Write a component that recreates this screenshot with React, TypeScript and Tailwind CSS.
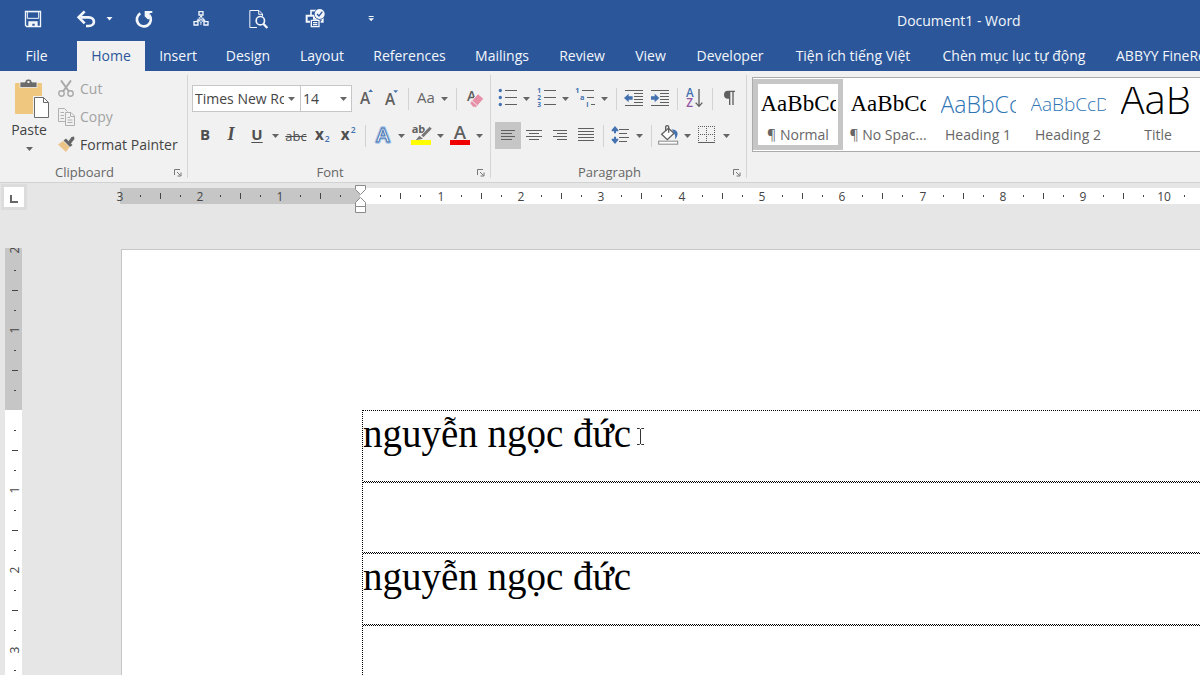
import type { ReactNode } from "react";

const INK = "#5f5f5f";
const BLUE = "#4472b0";

function Glyph({ children }: { children: ReactNode }) {
  return (
    <svg viewBox="0 0 78 81" className="h-[27px] w-[26px] shrink-0" fill="none" aria-hidden="true">
      {children}
    </svg>
  );
}

function Caret() {
  return (
    <svg viewBox="0 0 7 4" className="h-1 w-[7px] shrink-0" aria-hidden="true">
      <path d="M0 0H7L3.5 4Z" fill="#666" />
    </svg>
  );
}

function Tool({ label, children, active = false }: { label: string; children: ReactNode; active?: boolean }) {
  return (
    <button
      type="button"
      aria-label={label}
      className={`flex h-[27px] w-[26px] shrink-0 items-center justify-center text-[#4f4f4f] ${active ? "bg-[#c6c6c6]" : ""}`}
    >
      {children}
    </button>
  );
}

function More({ label }: { label: string }) {
  return (
    <button type="button" aria-label={label} className="flex h-[27px] w-[13px] shrink-0 items-center pl-0.5">
      <Caret />
    </button>
  );
}

function Divider() {
  return <span className="mx-1 h-[22px] w-px shrink-0 bg-[#d2d2d2]" />;
}

function Lines({ rows }: { rows: [number, number, number][] }) {
  return (
    <>
      {rows.map(([x, y, w]) => (
        <rect key={`${x}-${y}`} x={x} y={y} width={w} height="3" fill={INK} />
      ))}
    </>
  );
}

function Group({ title, width, children }: { title: string; width: string; children: ReactNode }) {
  return (
    <section aria-label={title} className={`my-1 flex shrink-0 flex-col border-r border-[#d5d5d5] ${width}`}>
      <div className="h-[87px]">{children}</div>
      <div className="flex h-5 items-center pt-2">
        <span className="flex-1 pr-1 text-center text-[13px] leading-5 text-[#666]">{title}</span>
        <button type="button" aria-label={`${title} settings`} className="mr-[5px] flex size-[9px] items-center">
          <svg viewBox="0 0 9 9" className="size-[9px]" fill="none" stroke="#777">
            <path d="M1.5 7V1.5H7M4 4L7.5 7.5M8 4.5V8H4.500" />
          </svg>
        </button>
      </div>
    </section>
  );
}

function Launch({ label, children }: { label: string; children: ReactNode }) {
  return (
    <button type="button" aria-label={label} className="flex size-[26px] shrink-0 items-center justify-center">
      <svg viewBox="0 0 78 78" className="size-[26px]" fill="none" stroke="#f3f6fb" strokeWidth="3" aria-hidden="true">
        {children}
      </svg>
    </button>
  );
}

function TitleBar() {
  return (
    <div className="flex h-[41px] items-center justify-between pl-5">
      <div className="flex shrink-0 items-center pb-[3px]">
        <Launch label="Save">
          <path d="M16.500 16.500H61.500V61.500H20L16.500 58Z" strokeWidth="4" />
          <path d="M22 17H56V37H22Z" strokeWidth="3" />
          <path d="M25 62V46H53V62H44V53H37V62Z" fill="#f3f6fb" stroke="none" />
        </Launch>
        <div className="ml-7 flex items-center">
          <Launch label="Undo">
            <path d="M20 34H44C65 34 65 60 44 60H36" strokeWidth="8" />
            <path d="M32 16L14 34L32 52" strokeWidth="8" />
          </Launch>
          <button type="button" aria-label="Undo history" className="flex h-6 w-[18px] items-center justify-center">
            <svg viewBox="0 0 7 4" className="h-1 w-[7px]">
              <path d="M0.500 0H6.500L3.500 3.500Z" fill="#f3f6fb" />
            </svg>
          </button>
        </div>
        <div className="ml-[13px]">
          <Launch label="Repeat">
            <path d="M28 22A21 21 0 1 0 55 27" strokeWidth="8" />
            <path d="M41 15H64V20L56 22V40H50L41 31Z" fill="#f3f6fb" stroke="none" />
          </Launch>
        </div>
        <div className="ml-[31px]">
          <Launch label="Organization chart">
            <path d="M33 17H45V27H33ZM18 47H30V57H18ZM48 47H60V57H48Z" strokeWidth="4" />
            <path d="M39 29V34M33 42L26 46M45 42L52 46" strokeWidth="4" />
            <path d="M39 31L48 40L39 49L30 40Z" strokeWidth="4" strokeDasharray="4 2" />
            <path d="M34 40H44M39 35V45M36 54H42" strokeDasharray="3 1" />
          </Launch>
        </div>
        <div className="ml-[31px]">
          <Launch label="Print preview">
            <path d="M36 64.500H14.500V13.500H42L52.500 24V30M41 14V25H52" />
            <circle cx="46" cy="44" r="12.500" strokeWidth="5" />
            <path d="M55 53L67 66" strokeWidth="7" />
          </Launch>
        </div>
        <div className="ml-[31px]">
          <Launch label="Quick print">
            <path d="M27 28V14H42" strokeWidth="5" />
            <path d="M24 47H14V29H36V38H62V47H56" strokeWidth="6" />
            <path d="M28 43H51V62H28ZM33 50H46M33 56H46" strokeWidth="4" />
            <circle cx="53" cy="24" r="17" fill="#2b579a" stroke="none" />
            <circle cx="53" cy="24" r="15" fill="#f3f6fb" stroke="none" />
            <path d="M45 24L51 30L61 17" stroke="#2b579a" strokeWidth="4" />
          </Launch>
        </div>
        <div className="ml-[30px]">
          <Launch label="Customize toolbar">
            <path d="M32 31.500H47" />
            <path d="M31 37H48L39.500 46Z" fill="#f3f6fb" stroke="none" />
          </Launch>
        </div>
      </div>
      <h1 className="w-[303px] text-[14px] leading-5 text-[#f3f6fb]">Document1 - Word</h1>
    </div>
  );
}

const tabs = [
  { name: "Insert", width: "w-[66px]" },
  { name: "Design", width: "w-[74px]" },
  { name: "Layout", width: "w-[74px]" },
  { name: "References", width: "w-[101px]" },
  { name: "Mailings", width: "w-[84px]" },
  { name: "Review", width: "w-[76px]" },
  { name: "View", width: "w-[61px]" },
  { name: "Developer", width: "w-[98px]" },
  { name: "Tiện ích tiếng Việt", width: "w-[148px]" },
  { name: "Chèn mục lục tự động", width: "w-[174px]" },
];

function Tabs() {
  return (
    <nav aria-label="Ribbon tabs" className="flex h-[30px] whitespace-nowrap text-[14px] leading-[30px] text-[#f3f6fb]">
      <button type="button" className="mr-1 w-[73px] shrink-0">File</button>
      <button type="button" aria-current="page" className="w-[68px] shrink-0 bg-[#f1f1f1] text-[#2b579a]">
        Home
      </button>
      {tabs.map((t) => (
        <button key={t.name} type="button" className={`shrink-0 ${t.width}`}>
          {t.name}
        </button>
      ))}
      <button type="button" className="shrink-0 px-[15px]">ABBYY FineReader 12</button>
    </nav>
  );
}

function Clipboard() {
  return (
    <Group title="Clipboard" width="w-[188px]">
      <div className="flex pt-1 pl-2">
        <button type="button" className="flex w-[42px] flex-col items-center text-[14px] leading-[22px] text-[#444]">
          <svg viewBox="0 0 34 40" className="ml-[6px] h-10 w-[34px]" aria-hidden="true">
            <path d="M1 4H26Q27 4 27 5V34Q27 35 26 35H1Q0 35 0 34V5Q0 4 1 4Z" fill="#f0c77f" />
            <path d="M5 3H10Q10 0 13.500 0T17 3H22V8.500H5Z" fill="#6b6b6b" stroke="#f1f1f1" strokeWidth="0.800" />
            <rect x="12.500" y="2" width="2" height="2" fill="#f1f1f1" />
            <path d="M18 17H30L35 22V39H18Z" fill="#f1f1f1" />
            <path d="M19.500 18.500H28.500L33.500 23.500V38.500H19.500Z" fill="#fff" stroke="#6b6b6b" />
            <path d="M28.500 18.500V23.500H33.500" fill="none" stroke="#6b6b6b" />
          </svg>
          <span>Paste</span>
          <span className="flex h-4 items-center">
            <Caret />
          </span>
        </button>
        <div className="ml-2 flex flex-col text-[14px] leading-5 text-[#a3a3a3]">
          <button type="button" className="mb-2 flex h-5 items-center gap-[5px]">
            <svg viewBox="0 0 17 18" className="h-[18px] w-[17px]" fill="none" stroke="#a9a9a9" aria-hidden="true">
              <path d="M3 0.500L11 11.500M13 0.500L5 11.500" strokeWidth="2" />
              <circle cx="3.500" cy="13.500" r="2.700" strokeWidth="1.400" />
              <circle cx="12.500" cy="13.500" r="2.700" strokeWidth="1.400" />
            </svg>
            Cut
          </button>
          <button type="button" className="mb-2 flex h-5 items-center gap-[5px]">
            <svg viewBox="0 0 17 18" className="h-[18px] w-[17px]" fill="none" stroke="#b0b0b0" aria-hidden="true">
              <path d="M7 13.500H0.500V0.500H6.500L9.500 3.500M2.500 4.500H6M2.500 7.500H6M2.500 10.500H6" />
              <path d="M7.500 4.500H13L16.500 8V17.500H7.500ZM12.500 5V8.500H16M9.500 9.500H12M9.500 12H14.500M9.500 14.500H14.500" />
            </svg>
            Copy
          </button>
          <button type="button" className="flex h-5 items-center gap-[5px] text-[#444]">
            <svg viewBox="0 0 17 18" className="h-[18px] w-[17px]" aria-hidden="true">
              <path d="M0 8.500L5 5L11.500 11L8 16Z" fill="#ecc488" />
              <path d="M5.500 4.500L8 2.500L14.500 9L12 11Z" fill="#666" />
              <path d="M10 6L13.500 1L16 0.500L16.500 3L12.500 8Z" fill="#666" />
            </svg>
            Format Painter
          </button>
        </div>
      </div>
    </Group>
  );
}

function FontGroup() {
  return (
    <Group title="Font" width="w-[303px]">
      <div className="flex flex-col gap-[10px] pt-[10px] pl-1">
        <div className="flex h-[27px] items-center">
          <div className="flex h-[27px] w-[109px] shrink-0 items-center gap-1 border border-[#c6c6c6] bg-white">
            <select aria-label="Font name" className="h-[25px] w-[91px] appearance-none overflow-hidden pl-0.5 text-[14px] text-[#444]">
              <option>Times New Roman</option>
            </select>
            <Caret />
          </div>
          <div className="-ml-px flex h-[27px] w-[52px] shrink-0 items-center border border-[#c6c6c6] bg-white">
            <select aria-label="Font size" className="h-[25px] w-[39px] appearance-none pl-0.5 text-[14px] text-[#444]">
              <option>14</option>
            </select>
            <Caret />
          </div>
          <Tool label="Grow font">
            <Glyph>
              <text x="24" y="57" fontFamily="Open Sans" fontSize="46" fontWeight="600" fill={INK}>A</text>
              <path d="M49 21L56 13L63 21Z" fill={BLUE} />
            </Glyph>
          </Tool>
          <Tool label="Shrink font">
            <Glyph>
              <text x="21" y="60" fontFamily="Open Sans" fontSize="46" fontWeight="600" fill={INK}>A</text>
              <path d="M46 16H60L53 24Z" fill={BLUE} />
            </Glyph>
          </Tool>
          <Divider />
          <Tool label="Change case">
            <span className="mb-1 text-[15px] leading-5 text-[#666]">Aa</span>
          </Tool>
          <More label="Case options" />
          <Divider />
          <Tool label="Clear formatting">
            <Glyph>
              <text x="18" y="47" fontFamily="Open Sans" fontSize="42" fontWeight="600" fill={INK}>A</text>
              <path d="M26 54L51 26L68 41L46 67H36Z" fill="#e78fa6" stroke="#f1f1f1" strokeWidth="3" />
              <path d="M33 47L49 62" stroke="#f1f1f1" strokeWidth="3" />
            </Glyph>
          </Tool>
        </div>
        <div className="flex h-[27px] items-center">
          <Tool label="Bold"><span className="mb-1 text-[15px] leading-5 font-bold">B</span></Tool>
          <Tool label="Italic"><span className="mb-1 font-['Liberation_Serif'] text-[18px] leading-5 font-bold italic">I</span></Tool>
          <Tool label="Underline"><span className="mb-1 text-[15px] leading-5 font-bold underline underline-offset-2">U</span></Tool>
          <More label="Underline styles" />
          <Tool label="Strikethrough"><span className="text-[13px] leading-5 line-through">abc</span></Tool>
          <Tool label="Subscript">
            <Glyph>
              <text x="18" y="54" fontFamily="Open Sans" fontSize="46" fontWeight="700" fill="#4f4f4f">x</text>
              <text x="47" y="61" fontFamily="Open Sans" fontSize="26" fontWeight="600" fill={BLUE}>2</text>
            </Glyph>
          </Tool>
          <Tool label="Superscript">
            <Glyph>
              <text x="17" y="54" fontFamily="Open Sans" fontSize="46" fontWeight="700" fill="#4f4f4f">x</text>
              <text x="47" y="32" fontFamily="Open Sans" fontSize="26" fontWeight="600" fill={BLUE}>2</text>
            </Glyph>
          </Tool>
          <Divider />
          <Tool label="Text effects">
            <Glyph>
              <text x="19" y="60" fontFamily="Open Sans" fontSize="60" fontWeight="600" fill="#fff" stroke="#a9c8ea" strokeWidth="10" strokeLinejoin="round" paintOrder="stroke">A</text>
              <text x="19" y="60" fontFamily="Open Sans" fontSize="60" fontWeight="600" fill="#fff" stroke={BLUE} strokeWidth="3">A</text>
            </Glyph>
          </Tool>
          <More label="Text effect options" />
          <Tool label="Highlight">
            <Glyph>
              <text x="8" y="34" fontFamily="Open Sans" fontSize="33" fontWeight="700" fill={INK}>ab</text>
              <path d="M66 16L38 45" stroke="#f1f1f1" strokeWidth="13" />
              <path d="M65 17L40 43" stroke="#777" strokeWidth="9" />
              <path d="M31 41L42 50L20 55Z" fill="#777" />
              <rect x="6" y="54" width="60" height="15" fill="#ffff00" />
            </Glyph>
          </Tool>
          <More label="Highlight colors" />
          <Tool label="Font color">
            <Glyph>
              <text x="17" y="50" fontFamily="Open Sans" fontSize="56" fontWeight="600" fill={INK}>A</text>
              <rect x="6" y="54" width="60" height="15" fill="#f00000" />
            </Glyph>
          </Tool>
          <More label="Font colors" />
        </div>
      </div>
    </Group>
  );
}

function Paragraph() {
  return (
    <Group title="Paragraph" width="w-[256px]">
      <div className="flex flex-col gap-[10px] pt-[10px] pl-1">
        <div className="flex h-[27px] items-center">
          <Tool label="Bullets">
            <Glyph>
              <circle cx="16" cy="16.500" r="5" fill={BLUE} />
              <circle cx="16" cy="37.500" r="5" fill={BLUE} />
              <circle cx="16" cy="58.500" r="5" fill={BLUE} />
              <Lines rows={[[30, 15, 36], [30, 36, 36], [30, 57, 36]]} />
            </Glyph>
          </Tool>
          <More label="Bullet styles" />
          <Tool label="Numbering">
            <Glyph>
              <g fontFamily="Open Sans" fontSize="20" fontWeight="700" fill={BLUE}>
                <text x="10" y="24">1</text>
                <text x="10" y="45">2</text>
                <text x="10" y="66">3</text>
              </g>
              <Lines rows={[[30, 15, 36], [30, 36, 36], [30, 57, 36]]} />
            </Glyph>
          </Tool>
          <More label="Numbering styles" />
          <Tool label="Multilevel list">
            <Glyph>
              <g fontFamily="Open Sans" fontSize="22" fontWeight="700" fill={BLUE}>
                <text x="7" y="25">1</text>
                <text x="21" y="46">a</text>
                <text x="40" y="66">i</text>
              </g>
              <Lines rows={[[27, 15, 36], [42, 36, 21], [54, 57, 12]]} />
            </Glyph>
          </Tool>
          <More label="Multilevel styles" />
          <Divider />
          <Tool label="Decrease indent">
            <Glyph>
              <Lines rows={[[12, 15, 54], [39, 24, 27], [39, 33, 27], [39, 42, 27], [39, 51, 27], [12, 60, 54]]} />
              <path d="M9 39L23 26V34H35V44H23V52Z" fill={BLUE} />
            </Glyph>
          </Tool>
          <Tool label="Increase indent">
            <Glyph>
              <Lines rows={[[12, 15, 54], [39, 24, 27], [39, 33, 27], [39, 42, 27], [39, 51, 27], [12, 60, 54]]} />
              <path d="M37 39L23 26V34H12V44H23V52Z" fill={BLUE} />
            </Glyph>
          </Tool>
          <Divider />
          <Tool label="Sort">
            <Glyph>
              <text x="12" y="36" fontFamily="Open Sans" fontSize="35" fontWeight="600" fill={BLUE}>A</text>
              <text x="13" y="65" fontFamily="Open Sans" fontSize="35" fontWeight="600" fill="#9455a5">Z</text>
              <path d="M51 12V63M41 53L51 64L61 53" stroke={INK} strokeWidth="4" />
            </Glyph>
          </Tool>
          <Divider />
          <Tool label="Show paragraph marks">
            <Glyph>
              <path d="M33 17H54V21H50V60H46V21H40V60H36V41H33A12 12 0 0 1 33 17Z" fill={INK} />
            </Glyph>
          </Tool>
        </div>
        <div className="flex h-[27px] items-center">
          <Tool label="Align left" active>
            <Glyph><Lines rows={[[18, 24, 42], [18, 33, 33], [18, 42, 42], [18, 51, 33]]} /></Glyph>
          </Tool>
          <Tool label="Align center">
            <Glyph><Lines rows={[[15, 24, 48], [24, 33, 30], [15, 42, 48], [24, 51, 30]]} /></Glyph>
          </Tool>
          <Tool label="Align right">
            <Glyph><Lines rows={[[18, 24, 42], [30, 33, 30], [18, 42, 42], [30, 51, 30]]} /></Glyph>
          </Tool>
          <Tool label="Justify">
            <Glyph><Lines rows={[[15, 18, 48], [15, 27, 48], [15, 36, 48], [15, 45, 48], [15, 54, 48]]} /></Glyph>
          </Tool>
          <Divider />
          <Tool label="Line spacing">
            <Glyph>
              <path d="M21 12L31 24V28H24V34H18V28H11V24ZM21 66L31 54V50H24V44H18V50H11V54Z" fill={BLUE} />
              <Lines rows={[[33, 21, 30], [33, 33, 24], [33, 45, 30], [33, 57, 24]]} />
            </Glyph>
          </Tool>
          <More label="Line spacing options" />
          <Divider />
          <Tool label="Shading">
            <Glyph>
              <path d="M37 19L54 34L34 53L17 37Z" fill="#fff" stroke={INK} strokeWidth="4" />
              <path d="M29 27V14Q29 11 33 11T38 14V32" stroke={INK} strokeWidth="4" />
              <path d="M47 22Q65 24 65 36Q64 46 57 52Q59 40 53 31Z" fill={BLUE} />
              <rect x="8" y="57.500" width="57" height="9" fill="#fff" stroke="#888" strokeWidth="3" />
            </Glyph>
          </Tool>
          <More label="Shading colors" />
          <Tool label="Borders">
            <Glyph>
              <path d="M10.500 12V63M34.500 12V63M58.500 12V63" stroke={INK} strokeWidth="3" strokeDasharray="3 3" />
              <path d="M9 13.500H60M9 37.500H60" stroke={INK} strokeWidth="3" strokeDasharray="3 3" />
              <path d="M9 61.500H60" stroke={INK} strokeWidth="3" />
            </Glyph>
          </Tool>
          <More label="Border styles" />
        </div>
      </div>
    </Group>
  );
}

const styles = [
  { name: "¶ Normal", sample: "AaBbCc", look: "font-['Liberation_Serif',serif] text-[23px] leading-[34px] text-black" },
  { name: "¶ No Spac...", sample: "AaBbCc", look: "font-['Liberation_Serif',serif] text-[23px] leading-[34px] text-black" },
  { name: "Heading 1", sample: "AaBbCc", look: "font-light text-[23px] leading-[34px] text-[#2e74b5]" },
  { name: "Heading 2", sample: "AaBbCcD", look: "font-light text-[19px] leading-[34px] text-[#2e74b5]" },
  { name: "Title", sample: "AaB", look: "font-light text-[40px] leading-[24px] text-black" },
];

function StyleGallery() {
  return (
    <section aria-label="Styles" className="ml-[5px] flex h-[75px] min-w-0 flex-1 self-start overflow-hidden border border-r-0 border-[#ababab] bg-white">
      {styles.map((s, i) => (
        <button
          key={s.name}
          type="button"
          aria-pressed={i === 0}
          className={`my-px flex h-[71px] w-[90px] shrink-0 flex-col items-center border-[5px] ${i === 0 ? "border-[#c6c6c6]" : "border-transparent"}`}
        >
          <span className={`mt-[3px] h-[33px] w-[75px] overflow-hidden text-left whitespace-nowrap ${s.look}`}>{s.sample}</span>
          <span className="-mx-1 mt-[5px] text-[14px] leading-5 whitespace-nowrap text-[#666]">{s.name}</span>
        </button>
      ))}
    </section>
  );
}

const rulerUnits = ["3", "2", "1", "", "1", "2", "3", "4", "5", "6", "7", "8", "9", "10"];
const sideUnits = ["2", "1", "", "1", "2", "3"];

function TopRuler() {
  return (
    <div className="flex h-[65px] shrink-0 items-start overflow-hidden">
      <button
        type="button"
        aria-label="Tab stop type"
        className="mt-px ml-px flex size-[26px] shrink-0 items-center justify-center border-[3px] border-[#dcdcdc] bg-white"
      >
        <svg viewBox="0 0 8 8" className="mt-1 size-2" aria-hidden="true">
          <path d="M1 0V7H8" fill="none" stroke="#666" strokeWidth="2" />
        </svg>
      </button>
      <div className="relative mt-[5px] ml-[93px] h-4 min-w-0 flex-1 bg-[linear-gradient(to_right,#c6c6c6_240px,#ffffff_240px)]">
        <div className="-ml-[10px] flex h-4 w-0 text-[12px] leading-4 text-[#444]">
          {rulerUnits.map((u, i) => (
            <div key={i} className={`flex shrink-0 items-center ${i > 0 && i % 3 === 0 ? "w-[81px]" : "w-20"}`}>
              <span className="w-5 shrink-0 pt-0.5 text-center">{u}</span>
              <span className="flex w-5 justify-center"><i className="h-0.5 w-px bg-[#444]" /></span>
              <span className="flex w-5 justify-center"><i className="h-1.5 w-px bg-[#444]" /></span>
              <span className="flex w-5 justify-center"><i className="h-0.5 w-px bg-[#444]" /></span>
            </div>
          ))}
        </div>
        <svg viewBox="0 0 11 28" className="absolute -top-[3px] left-[235px] h-7 w-[11px]" fill="#fff" stroke="#8a8a8a" aria-hidden="true">
          <path d="M0.500 0.500H10.500V4.500L5.500 9.500L0.500 4.500Z" />
          <path d="M5.500 12.500L10.500 17.500V21.500H0.500V17.500Z" />
          <path d="M0.500 21.500H10.500V27.500H0.500Z" />
        </svg>
      </div>
    </div>
  );
}

function SideRuler() {
  return (
    <div className="ml-[5px] w-[17px] shrink-0 overflow-hidden bg-[linear-gradient(to_bottom,#c6c6c6_162px,#ffffff_162px)]">
      <div className="-mt-2 flex h-0 flex-col pl-0.5 text-[12px] text-[#444]">
        {sideUnits.map((u, i) => (
          <div key={i} className="flex h-20 shrink-0 flex-col items-center">
            <span className="flex size-5 shrink-0 -rotate-90 items-center justify-center leading-5">{u}</span>
            <span className="flex h-5 items-center"><i className="h-px w-0.5 bg-[#444]" /></span>
            <span className="flex h-5 items-center"><i className="h-px w-1.5 bg-[#444]" /></span>
            <span className="flex h-5 items-center"><i className="h-px w-0.5 bg-[#444]" /></span>
          </div>
        ))}
      </div>
    </div>
  );
}

const cells = ["nguyễn ngọc đức", "", "nguyễn ngọc đức", ""];

function Page() {
  return (
    <article className="mt-px ml-[99px] min-w-0 flex-1 overflow-hidden border-t border-l border-[#c6c6c6] bg-white pt-40 pl-60">
      <div className="relative">
        <table className="w-full border-separate border-spacing-0 border-t border-l border-dotted border-black">
          <tbody>
            {cells.map((c, i) => (
              <tr key={i}>
                <td
                  className={`bg-[linear-gradient(90deg,#000_1px,transparent_1px),linear-gradient(90deg,transparent_1px,#000_1px)] bg-[length:2px_1px] bg-[position:0_100%,0_calc(100%-1px)] bg-repeat-x p-0 align-top font-['Liberation_Serif',serif] text-[39px] leading-[46px] whitespace-nowrap text-black ${i % 2 === 0 ? "h-[72px]" : "h-[71px]"}`}
                >
                  {c}
                </td>
              </tr>
            ))}
          </tbody>
        </table>
        <svg viewBox="0 0 7 17" className="absolute top-[18px] left-[275px] h-[17px] w-[7px]" fill="none" stroke="#333" aria-hidden="true">
          <path d="M0 0.500H2.500L3.500 1.500L4.500 0.500H7M3.500 1V16M0 16.500H2.500L3.500 15.500L4.500 16.500H7" />
        </svg>
      </div>
    </article>
  );
}

export default function App() {
  return (
    <div className="flex h-screen flex-col overflow-hidden bg-[#e6e6e6] font-['Open_Sans','Noto_Sans',sans-serif]">
      <header className="shrink-0 overflow-hidden bg-[#2b579a]">
        <TitleBar />
        <Tabs />
      </header>
      <div className="flex h-28 shrink-0 overflow-hidden border-b border-[#d2d2d2] bg-[#f1f1f1]">
        <Clipboard />
        <FontGroup />
        <Paragraph />
        <div className="flex min-w-0 flex-1 pt-1.5">
          <StyleGallery />
        </div>
      </div>
      <TopRuler />
      <main className="flex min-h-0 flex-1">
        <SideRuler />
        <Page />
      </main>
    </div>
  );
}
